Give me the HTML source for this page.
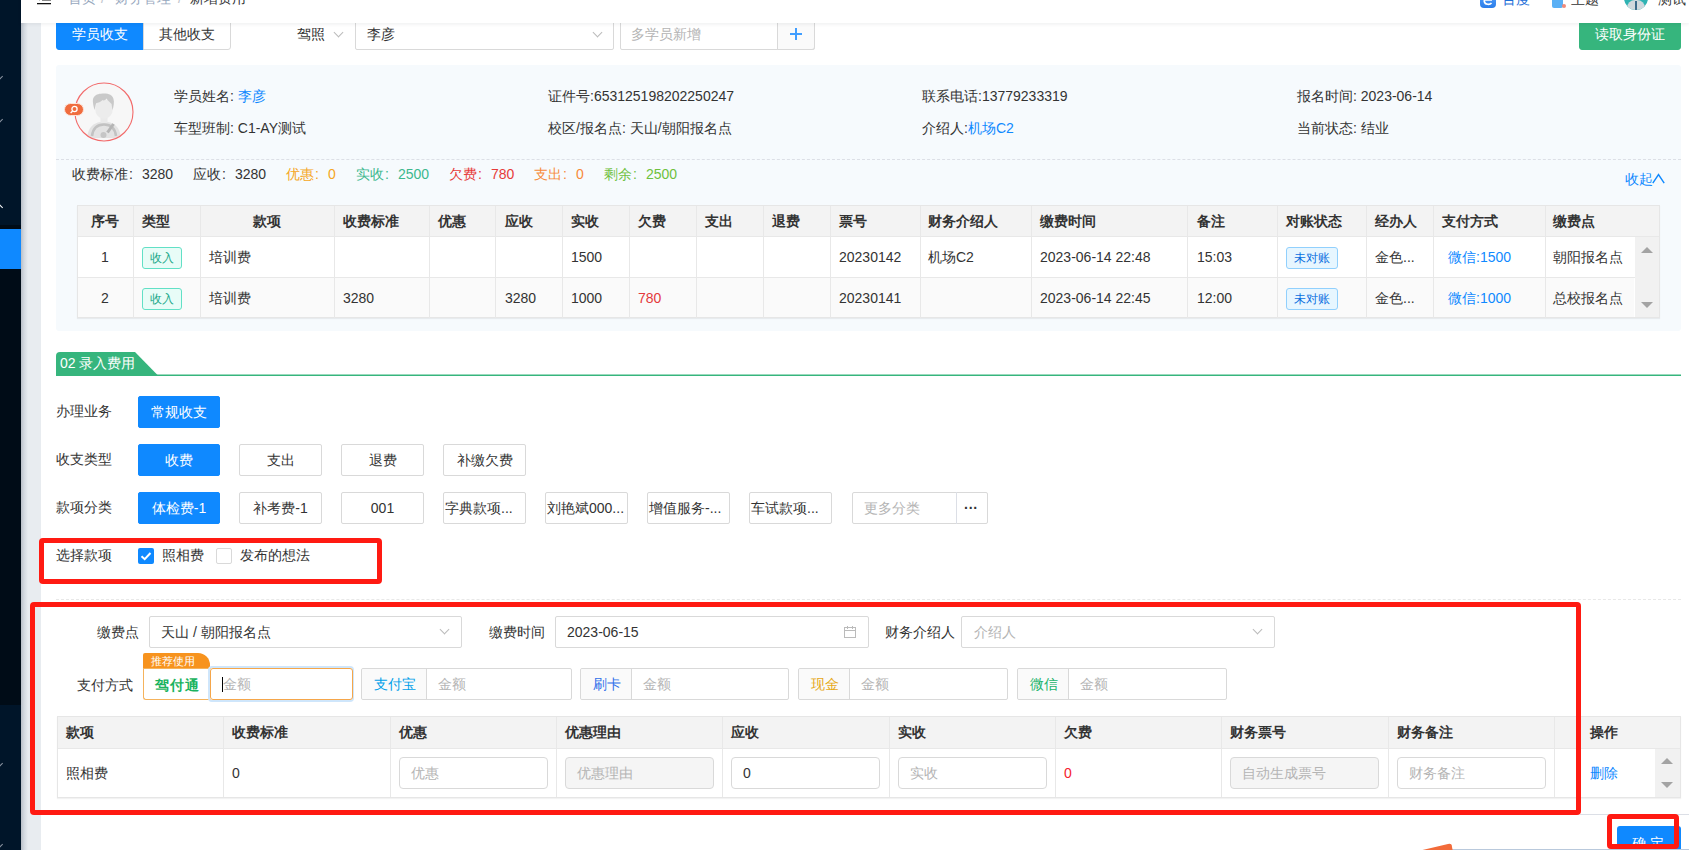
<!DOCTYPE html>
<html><head><meta charset="utf-8">
<style>
*{box-sizing:border-box;margin:0;padding:0}
html,body{width:1689px;height:850px;overflow:hidden;background:#fff;font-family:"Liberation Sans",sans-serif;font-size:14px;color:#333}
.a{position:absolute}
.t{position:absolute;white-space:nowrap;line-height:20px}
#sb{left:0;top:0;width:21px;height:850px;background:#001529}
#band{left:21px;top:0;width:20px;height:850px;background:#e8ecf0}
#band:before{content:"";position:absolute;left:0;top:0;width:7px;height:100%;background:linear-gradient(90deg,#b9bfc7,#d3d9e0 45%,#e8ecf0)}
#hdr{left:21px;top:0;width:1668px;height:23px;background:#fff;box-shadow:0 1px 4px rgba(0,21,41,.08);z-index:5;overflow:hidden}
.btn{position:absolute;height:32px;border:1px solid #d9d9d9;background:#fff;text-align:center;line-height:30px;white-space:nowrap;overflow:hidden;color:#333;border-radius:2px}
.btn.p{background:#0f89ff;border-color:#0f89ff;color:#fff}
.inp{position:absolute;border:1px solid #d9d9d9;background:#fff;border-radius:2px}
.chev{position:absolute;width:7px;height:7px;border-right:1px solid #bbb;border-bottom:1px solid #bbb;transform:rotate(45deg)}
</style></head><body>
<div id="sb" class="a"></div>
<div id="band" class="a"></div>

<div class="a" style="left:0;top:225px;width:21px;height:4px;background:#000c17"></div>
<div class="a" style="left:0;top:229px;width:21px;height:40px;background:#0f89ff"></div>
<div class="a" style="left:0;top:269px;width:21px;height:436px;background:#000c17"></div>
<div class="a" style="left:-3px;top:74px;width:5px;height:5px;border-right:1px solid #8d97a3;border-bottom:1px solid #8d97a3;transform:rotate(45deg)"></div>
<div class="a" style="left:-3px;top:117px;width:5px;height:5px;border-right:1px solid #8d97a3;border-bottom:1px solid #8d97a3;transform:rotate(45deg)"></div>
<div class="a" style="left:-3px;top:205px;width:5px;height:5px;border-left:1px solid #fff;border-top:1px solid #fff;transform:rotate(45deg)"></div>
<div class="a" style="left:-3px;top:761px;width:5px;height:5px;border-right:1px solid #8d97a3;border-bottom:1px solid #8d97a3;transform:rotate(45deg)"></div>
<div class="a" style="left:-3px;top:842px;width:5px;height:5px;border-right:1px solid #8d97a3;border-bottom:1px solid #8d97a3;transform:rotate(45deg)"></div>
<div id="hdr" class="a">
<div class="a" style="left:21px;top:-1px;width:9px;height:2px;background:#888"></div>
<div class="a" style="left:18px;top:-1px;width:1px;height:2px;background:#ccc"></div>
<div class="a" style="left:16px;top:3px;width:14px;height:1px;background:#111;box-shadow:0 0.5px 0.5px #777"></div>
<div class="t" style="left:47px;top:-12px;color:#97a8be">首页</div>
<div class="t" style="left:80px;top:-12px;color:#c0c4cc">/</div>
<div class="t" style="left:94px;top:-12px;color:#97a8be">财务管理</div>
<div class="t" style="left:157px;top:-12px;color:#c0c4cc">/</div>
<div class="t" style="left:169px;top:-12px;color:#303133">新增费用</div>
<div class="a" style="left:1459px;top:-8px;width:16px;height:16px;border-radius:4px;background:linear-gradient(#5aa6ff,#2b7de9)"></div><svg class="a" style="left:1459px;top:-8px" width="16" height="16" viewBox="0 0 16 16"><path d="M4 8 H12 M11.5 11 C10 13 5 13 4.3 9.5 C4 6 8 4.5 11 6.5" stroke="#fff" stroke-width="1.6" fill="none"/></svg>
<div class="t" style="left:1481px;top:-11px;color:#1f6fd8">百度</div>
<div class="a" style="left:1531px;top:-6px;width:11px;height:14px;border-radius:2px;background:#5ab0f5"></div><div class="a" style="left:1531px;top:-6px;width:5px;height:4px;background:#f0c070"></div>
<div class="a" style="left:1541px;top:4px;width:4px;height:4px;border-radius:2px;background:#f08a7a"></div>
<div class="t" style="left:1550px;top:-11px;color:#333">主题</div>
<div class="a" style="left:1603px;top:-14px;width:24px;height:24px;border-radius:12px;background:#2fb3b3;overflow:hidden"><div class="a" style="left:9px;top:0px;width:6px;height:12px;border-radius:3px;background:#f3d9c6"></div><div class="a" style="left:3px;top:14px;width:18px;height:14px;border-radius:8px 8px 0 0;background:#cfd8dd"></div><div class="a" style="left:11px;top:15px;width:2px;height:9px;background:#3a6a8a"></div></div>
<div class="t" style="left:1637px;top:-11px;color:#333">测试</div>
</div>

<!-- top row -->
<div class="btn p" style="left:56px;top:18px;width:88px;border-radius:0 0 0 3px">学员收支</div>
<div class="btn" style="left:143px;top:18px;width:88px;border-radius:0 0 3px 0">其他收支</div>
<div class="t" style="left:297px;top:24px">驾照</div>
<div class="chev" style="left:335px;top:29px"></div>
<div class="inp" style="left:355px;top:18px;width:259px;height:32px"></div>
<div class="t" style="left:367px;top:24px">李彦</div>
<div class="chev" style="left:594px;top:29px"></div>
<div class="inp" style="left:620px;top:18px;width:195px;height:32px"></div>
<div class="a" style="left:777px;top:18px;width:38px;height:32px;border:1px solid #d9d9d9;background:#fafafa;border-radius:0 3px 3px 0"></div>
<div class="t" style="left:631px;top:24px;color:#b4b4b4">多学员新增</div>
<div class="a" style="left:790px;top:33px;width:12px;height:2px;background:#409eff"></div>
<div class="a" style="left:795px;top:28px;width:2px;height:12px;background:#409eff"></div>
<div class="btn" style="left:1579px;top:18px;width:102px;background:#36b57d;border-color:#36b57d;color:#fff;border-radius:3px">读取身份证</div>

<!-- info card -->
<div class="a" style="left:56px;top:65px;width:1625px;height:266px;background:#f6fafd;border-radius:3px"></div>
<svg class="a" style="left:74px;top:82px" width="60" height="60" viewBox="0 0 60 60">
<defs><clipPath id="cc"><circle cx="30" cy="30" r="28.5"/></clipPath></defs>
<circle cx="30" cy="30" r="28.6" fill="#f7f7f7"/>
<g clip-path="url(#cc)">
<path d="M13 56 C14 45 20 41 26 40 L34 40 C40 41 46 45 47 56 Z" fill="#e3e3e3"/>
<rect x="26.5" y="33" width="7" height="8" fill="#eaeaea"/>
<ellipse cx="30" cy="27" rx="8.8" ry="10" fill="#ececec"/>
<path d="M20.5 28 C19 22 18 17 20 15 C22 12 26 11.5 30 11.5 C35 11.5 38.5 13 39.5 17 C40.5 20 39.5 25 38.5 28 L37.5 22 C36 20 34 19 32.5 16.5 C31.5 18.5 29 19 28.5 18 C27 20 24 20.5 22 21.5 Z" fill="#c9c9c9"/>
<path d="M18 54 C19 46 24 42.5 30 42.5 C36 42.5 41 46 42 54" stroke="#c2c2c2" stroke-width="2.6" fill="none"/>
<path d="M33.5 50.5 L39.5 42" stroke="#b5b5b5" stroke-width="3"/>
<circle cx="29.5" cy="53" r="3" fill="#c6c6c6"/>
</g>
<circle cx="30" cy="30" r="29" fill="none" stroke="#f26a6a" stroke-width="1.1"/>
</svg>
<div class="a" style="left:64px;top:103px;width:20px;height:13px;border-radius:7px;background:#f06c3e;border:1px solid #fde3d8"></div>
<svg class="a" style="left:68px;top:105px" width="12" height="9" viewBox="0 0 12 9"><circle cx="6.5" cy="4" r="2.6" stroke="#fff" stroke-width="1.3" fill="none"/><path d="M4.6 6 L2.6 8" stroke="#fff" stroke-width="1.4"/></svg>

<div class="t" style="left:174px;top:86px">学员姓名: <span style="color:#0f89ff">李彦</span></div>
<div class="t" style="left:174px;top:118px">车型班制: C1-AY测试</div>
<div class="t" style="left:548px;top:86px">证件号:653125198202250247</div>
<div class="t" style="left:548px;top:118px">校区/报名点: 天山/朝阳报名点</div>
<div class="t" style="left:922px;top:86px">联系电话:13779233319</div>
<div class="t" style="left:922px;top:118px">介绍人:<span style="color:#0f89ff">机场C2</span></div>
<div class="t" style="left:1297px;top:86px">报名时间: 2023-06-14</div>
<div class="t" style="left:1297px;top:118px">当前状态: 结业</div>
<div class="a" style="left:56px;top:159px;width:1625px;height:0;border-top:1px dashed #dcdfe6"></div>

<div class="t" style="left:72px;top:164px">收费标准<span style="display:inline-block;width:14px;padding-left:1px">:</span>3280</div>
<div class="t" style="left:193px;top:164px">应收<span style="display:inline-block;width:14px;padding-left:1px">:</span>3280</div>
<div class="t" style="left:286px;top:164px;color:#f5a623">优惠<span style="display:inline-block;width:14px;padding-left:1px">:</span>0</div>
<div class="t" style="left:356px;top:164px;color:#3cb88e">实收<span style="display:inline-block;width:14px;padding-left:1px">:</span>2500</div>
<div class="t" style="left:449px;top:164px;color:#e63a3a">欠费<span style="display:inline-block;width:14px;padding-left:1px">:</span>780</div>
<div class="t" style="left:534px;top:164px;color:#f78a3a">支出<span style="display:inline-block;width:14px;padding-left:1px">:</span>0</div>
<div class="t" style="left:604px;top:164px;color:#6ec13e">剩余<span style="display:inline-block;width:14px;padding-left:1px">:</span>2500</div>
<div class="t" style="left:1625px;top:169px;color:#0f89ff">收起</div>
<svg class="a" style="left:1652px;top:173px" width="13" height="11" viewBox="0 0 13 11"><path d="M0.8 10.2 L6.5 1.5 L12.2 10.2" stroke="#0f89ff" stroke-width="1.4" fill="none"/></svg>

<!-- table1 -->
<div class="a" style="left:77px;top:205px;width:1583px;height:113px;background:#fff;border:1px solid #e6e6e6;box-shadow:0 1px 1px rgba(0,0,0,.06)"></div>
<div class="a" style="left:78px;top:206px;width:1581px;height:30px;background:#f3f3f3"></div>
<div class="a" style="left:78px;top:277px;width:1556px;height:40px;background:#fafafa"></div>
<div class="a" style="left:78px;top:236px;width:1581px;height:1px;background:#e8e8e8"></div>
<div class="a" style="left:78px;top:277px;width:1581px;height:1px;background:#e8e8e8"></div>
<div class="a" style="left:133px;top:206px;width:1px;height:112px;background:#e8e8e8"></div>
<div class="a" style="left:200px;top:206px;width:1px;height:112px;background:#e8e8e8"></div>
<div class="a" style="left:334px;top:206px;width:1px;height:112px;background:#e8e8e8"></div>
<div class="a" style="left:429px;top:206px;width:1px;height:112px;background:#e8e8e8"></div>
<div class="a" style="left:495px;top:206px;width:1px;height:112px;background:#e8e8e8"></div>
<div class="a" style="left:562px;top:206px;width:1px;height:112px;background:#e8e8e8"></div>
<div class="a" style="left:629px;top:206px;width:1px;height:112px;background:#e8e8e8"></div>
<div class="a" style="left:696px;top:206px;width:1px;height:112px;background:#e8e8e8"></div>
<div class="a" style="left:763px;top:206px;width:1px;height:112px;background:#e8e8e8"></div>
<div class="a" style="left:830px;top:206px;width:1px;height:112px;background:#e8e8e8"></div>
<div class="a" style="left:920px;top:206px;width:1px;height:112px;background:#e8e8e8"></div>
<div class="a" style="left:1031px;top:206px;width:1px;height:112px;background:#e8e8e8"></div>
<div class="a" style="left:1187px;top:206px;width:1px;height:112px;background:#e8e8e8"></div>
<div class="a" style="left:1277px;top:206px;width:1px;height:112px;background:#e8e8e8"></div>
<div class="a" style="left:1366px;top:206px;width:1px;height:112px;background:#e8e8e8"></div>
<div class="a" style="left:1433px;top:206px;width:1px;height:112px;background:#e8e8e8"></div>
<div class="a" style="left:1545px;top:206px;width:1px;height:112px;background:#e8e8e8"></div>

<div class="a" style="left:1635px;top:237px;width:24px;height:80px;background:#f1f1f1"></div>
<div class="a" style="left:1641px;top:247px;width:0;height:0;border-left:6px solid transparent;border-right:6px solid transparent;border-bottom:6px solid #a3a3a3"></div>
<div class="a" style="left:1641px;top:302px;width:0;height:0;border-left:6px solid transparent;border-right:6px solid transparent;border-top:6px solid #a3a3a3"></div>
<div class="t" style="left:77px;width:56px;text-align:center;top:211px;font-weight:bold">序号</div>
<div class="t" style="left:142px;top:211px;font-weight:bold">类型</div>
<div class="t" style="left:200px;width:134px;text-align:center;top:211px;font-weight:bold">款项</div>
<div class="t" style="left:343px;top:211px;font-weight:bold">收费标准</div>
<div class="t" style="left:438px;top:211px;font-weight:bold">优惠</div>
<div class="t" style="left:505px;top:211px;font-weight:bold">应收</div>
<div class="t" style="left:571px;top:211px;font-weight:bold">实收</div>
<div class="t" style="left:638px;top:211px;font-weight:bold">欠费</div>
<div class="t" style="left:705px;top:211px;font-weight:bold">支出</div>
<div class="t" style="left:772px;top:211px;font-weight:bold">退费</div>
<div class="t" style="left:839px;top:211px;font-weight:bold">票号</div>
<div class="t" style="left:928px;top:211px;font-weight:bold">财务介绍人</div>
<div class="t" style="left:1040px;top:211px;font-weight:bold">缴费时间</div>
<div class="t" style="left:1197px;top:211px;font-weight:bold">备注</div>
<div class="t" style="left:1286px;top:211px;font-weight:bold">对账状态</div>
<div class="t" style="left:1375px;top:211px;font-weight:bold">经办人</div>
<div class="t" style="left:1442px;top:211px;font-weight:bold">支付方式</div>
<div class="t" style="left:1553px;top:211px;font-weight:bold">缴费点</div>
<div class="t" style="left:77px;width:56px;text-align:center;top:247px">1</div>
<div class="a" style="left:142px;top:247px;width:40px;height:22px;border:1px solid #62e0c6;background:#e8fcf7;border-radius:3px;color:#20a889;font-size:12px;line-height:20px;text-align:center">收入</div>
<div class="t" style="left:209px;top:247px">培训费</div>
<div class="t" style="left:571px;top:247px">1500</div>
<div class="t" style="left:839px;top:247px">20230142</div>
<div class="t" style="left:928px;top:247px">机场C2</div>
<div class="t" style="left:1040px;top:247px">2023-06-14 22:48</div>
<div class="t" style="left:1197px;top:247px">15:03</div>
<div class="t" style="left:1375px;top:247px">金色...</div>
<div class="t" style="left:1448px;top:247px;color:#0f89ff">微信:1500</div>
<div class="t" style="left:1553px;top:247px">朝阳报名点</div>
<div class="a" style="left:1286px;top:247px;width:52px;height:22px;border:1px solid #91d0fd;background:#e7f6ff;border-radius:3px;color:#0b6fe0;font-size:12px;line-height:20px;text-align:center">未对账</div>
<div class="t" style="left:77px;width:56px;text-align:center;top:288px">2</div>
<div class="a" style="left:142px;top:288px;width:40px;height:22px;border:1px solid #62e0c6;background:#e8fcf7;border-radius:3px;color:#20a889;font-size:12px;line-height:20px;text-align:center">收入</div>
<div class="t" style="left:209px;top:288px">培训费</div>
<div class="t" style="left:343px;top:288px">3280</div>
<div class="t" style="left:505px;top:288px">3280</div>
<div class="t" style="left:571px;top:288px">1000</div>
<div class="t" style="left:638px;top:288px;color:#e4393c">780</div>
<div class="t" style="left:839px;top:288px">20230141</div>
<div class="t" style="left:1040px;top:288px">2023-06-14 22:45</div>
<div class="t" style="left:1197px;top:288px">12:00</div>
<div class="t" style="left:1375px;top:288px">金色...</div>
<div class="t" style="left:1448px;top:288px;color:#0f89ff">微信:1000</div>
<div class="t" style="left:1553px;top:288px">总校报名点</div>
<div class="a" style="left:1286px;top:288px;width:52px;height:22px;border:1px solid #91d0fd;background:#e7f6ff;border-radius:3px;color:#0b6fe0;font-size:12px;line-height:20px;text-align:center">未对账</div>

<!-- form -->
<svg class="a" style="left:56px;top:352px" width="1625" height="25" viewBox="0 0 1625 25">
<path d="M0 23.5 V4 Q0 0 4 0 H79 L102 23.5 Z" fill="#36b57d"/>
<rect x="0" y="22.5" width="1625" height="1.5" fill="#36b57d"/></svg>
<div class="t" style="left:60px;top:353px;color:#fff">02 录入费用</div>
<div class="t" style="left:56px;top:401px;color:#333">办理业务</div>
<div class="t" style="left:56px;top:449px;color:#333">收支类型</div>
<div class="t" style="left:56px;top:497px;color:#333">款项分类</div>
<div class="t" style="left:56px;top:545px;color:#333">选择款项</div>
<div class="btn p" style="left:138px;top:396px;width:82px;">常规收支</div>
<div class="btn p" style="left:138px;top:444px;width:82px;">收费</div>
<div class="btn" style="left:239px;top:444px;width:83px;">支出</div>
<div class="btn" style="left:341px;top:444px;width:83px;">退费</div>
<div class="btn" style="left:443px;top:444px;width:83px;">补缴欠费</div>
<div class="btn p" style="left:138px;top:492px;width:82px;padding:0 2px;text-overflow:clip">体检费-1</div>
<div class="btn" style="left:239px;top:492px;width:83px;padding:0 2px;text-overflow:clip">补考费-1</div>
<div class="btn" style="left:341px;top:492px;width:83px;padding:0 2px;text-overflow:clip">001</div>
<div class="btn" style="left:443px;top:492px;width:83px;padding:0 0 0 1px;text-align:left">字典款项...</div>
<div class="btn" style="left:545px;top:492px;width:83px;padding:0 0 0 1px;text-align:left">刘艳斌000...</div>
<div class="btn" style="left:647px;top:492px;width:83px;padding:0 0 0 1px;text-align:left">增值服务-...</div>
<div class="btn" style="left:749px;top:492px;width:83px;padding:0 0 0 1px;text-align:left">车试款项...</div>
<div class="inp" style="left:852px;top:492px;width:136px;height:32px;border-radius:2px"></div>
<div class="a" style="left:956px;top:492px;width:1px;height:32px;background:#dcdfe6"></div>
<div class="t" style="left:864px;top:498px;color:#b4b4b4">更多分类</div>
<div class="t" style="left:964px;top:498px;color:#333;font-weight:bold;letter-spacing:0px">···</div>
<div class="a" style="left:138px;top:548px;width:16px;height:16px;background:#0f89ff;border-radius:2px"></div>
<svg class="a" style="left:138px;top:548px" width="16" height="16" viewBox="0 0 16 16"><path d="M3.5 8.2 L6.7 11.2 L12.5 5" stroke="#fff" stroke-width="2" fill="none"/></svg>
<div class="t" style="left:162px;top:545px">照相费</div>
<div class="a" style="left:216px;top:548px;width:16px;height:16px;border:1px solid #d9d9d9;background:#fff;border-radius:2px"></div>
<div class="t" style="left:240px;top:545px">发布的想法</div>
<div class="a" style="left:56px;top:599px;width:1625px;height:0;border-top:1px dashed #e8e8e8"></div>
<div class="t" style="left:56px;width:83px;text-align:right;top:622px">缴费点</div>
<div class="inp" style="left:149px;top:616px;width:313px;height:32px"></div>
<div class="t" style="left:161px;top:622px">天山 / 朝阳报名点</div>
<div class="chev" style="left:441px;top:626px"></div>
<div class="t" style="left:489px;top:622px">缴费时间</div>
<div class="inp" style="left:555px;top:616px;width:314px;height:32px"></div>
<div class="t" style="left:567px;top:622px">2023-06-15</div>
<svg class="a" style="left:843px;top:625px" width="14" height="14" viewBox="0 0 14 14"><rect x="1.5" y="2.5" width="11" height="10" fill="none" stroke="#bbb" stroke-width="1"/><path d="M1.5 5.5 H12.5 M4.5 1 V4 M9.5 1 V4" stroke="#bbb" stroke-width="1"/></svg>
<div class="t" style="left:885px;top:622px">财务介绍人</div>
<div class="inp" style="left:961px;top:616px;width:314px;height:32px"></div>
<div class="t" style="left:974px;top:622px;color:#b4b4b4">介绍人</div>
<div class="chev" style="left:1254px;top:626px"></div>
<div class="t" style="left:56px;width:77px;text-align:right;top:675px">支付方式</div>
<div class="a" style="left:143px;top:653px;width:67px;height:17px;background:#f7931e;border-radius:2px 12px 0 0"></div>
<div class="t" style="left:151px;top:651px;color:#fff;font-size:11px">推荐使用</div>
<div class="a" style="left:143px;top:668px;width:68px;height:32px;border:1px solid #f5b35c;border-right:none;background:#fff;border-radius:0 0 0 3px"></div>
<div class="t" style="left:155px;top:675px;color:#1ab35e;font-weight:bold;letter-spacing:1px">驾付通</div>
<div class="a" style="left:208px;top:666px;width:146px;height:36px;border:2px solid #cfe6fb;border-radius:4px"></div>
<div class="a" style="left:210px;top:668px;width:143px;height:32px;border:1px solid #f5a64a;background:#fff;border-radius:3px"></div>
<div class="a" style="left:222px;top:677px;width:1px;height:15px;background:#000"></div>
<div class="t" style="left:223px;top:674px;color:#b4b4b4">金额</div>
<div class="inp" style="left:361px;top:668px;width:211px;height:32px"></div>
<div class="a" style="left:362px;top:669px;width:65px;height:30px;background:#fafafa;border-right:1px solid #d9d9d9;border-radius:2px 0 0 2px"></div>
<div class="t" style="left:362px;width:65px;text-align:center;top:674px;color:#00a0e9">支付宝</div>
<div class="t" style="left:438px;top:674px;color:#b4b4b4">金额</div>
<div class="inp" style="left:580px;top:668px;width:209px;height:32px"></div>
<div class="a" style="left:581px;top:669px;width:51px;height:30px;background:#fafafa;border-right:1px solid #d9d9d9;border-radius:2px 0 0 2px"></div>
<div class="t" style="left:581px;width:51px;text-align:center;top:674px;color:#2f6fea">刷卡</div>
<div class="t" style="left:643px;top:674px;color:#b4b4b4">金额</div>
<div class="inp" style="left:798px;top:668px;width:210px;height:32px"></div>
<div class="a" style="left:799px;top:669px;width:51px;height:30px;background:#fafafa;border-right:1px solid #d9d9d9;border-radius:2px 0 0 2px"></div>
<div class="t" style="left:799px;width:51px;text-align:center;top:674px;color:#e6a817">现金</div>
<div class="t" style="left:861px;top:674px;color:#b4b4b4">金额</div>
<div class="inp" style="left:1017px;top:668px;width:210px;height:32px"></div>
<div class="a" style="left:1018px;top:669px;width:51px;height:30px;background:#fafafa;border-right:1px solid #d9d9d9;border-radius:2px 0 0 2px"></div>
<div class="t" style="left:1018px;width:51px;text-align:center;top:674px;color:#20b36b">微信</div>
<div class="t" style="left:1080px;top:674px;color:#b4b4b4">金额</div>

<!-- table2/footer -->
<div class="a" style="left:57px;top:716px;width:1624px;height:82px;background:#fff;border:1px solid #e6e6e6;box-shadow:0 1px 1px rgba(0,0,0,.05)"></div>
<div class="a" style="left:58px;top:717px;width:1622px;height:31px;background:#f3f3f3"></div>
<div class="a" style="left:58px;top:748px;width:1622px;height:1px;background:#e8e8e8"></div>
<div class="a" style="left:223px;top:717px;width:1px;height:80px;background:#e8e8e8"></div>
<div class="a" style="left:390px;top:717px;width:1px;height:80px;background:#e8e8e8"></div>
<div class="a" style="left:556px;top:717px;width:1px;height:80px;background:#e8e8e8"></div>
<div class="a" style="left:722px;top:717px;width:1px;height:80px;background:#e8e8e8"></div>
<div class="a" style="left:889px;top:717px;width:1px;height:80px;background:#e8e8e8"></div>
<div class="a" style="left:1055px;top:717px;width:1px;height:80px;background:#e8e8e8"></div>
<div class="a" style="left:1221px;top:717px;width:1px;height:80px;background:#e8e8e8"></div>
<div class="a" style="left:1388px;top:717px;width:1px;height:80px;background:#e8e8e8"></div>
<div class="a" style="left:1554px;top:717px;width:1px;height:80px;background:#e8e8e8"></div>
<div class="a" style="left:1655px;top:749px;width:25px;height:48px;background:#f1f1f1"></div>
<div class="a" style="left:1661px;top:758px;width:0;height:0;border-left:6px solid transparent;border-right:6px solid transparent;border-bottom:6px solid #a3a3a3"></div>
<div class="a" style="left:1661px;top:782px;width:0;height:0;border-left:6px solid transparent;border-right:6px solid transparent;border-top:6px solid #a3a3a3"></div>
<div class="t" style="left:66px;top:722px;font-weight:bold">款项</div>
<div class="t" style="left:232px;top:722px;font-weight:bold">收费标准</div>
<div class="t" style="left:399px;top:722px;font-weight:bold">优惠</div>
<div class="t" style="left:565px;top:722px;font-weight:bold">优惠理由</div>
<div class="t" style="left:731px;top:722px;font-weight:bold">应收</div>
<div class="t" style="left:898px;top:722px;font-weight:bold">实收</div>
<div class="t" style="left:1064px;top:722px;font-weight:bold">欠费</div>
<div class="t" style="left:1230px;top:722px;font-weight:bold">财务票号</div>
<div class="t" style="left:1397px;top:722px;font-weight:bold">财务备注</div>
<div class="t" style="left:1590px;top:722px;font-weight:bold">操作</div>
<div class="t" style="left:66px;top:763px">照相费</div>
<div class="t" style="left:232px;top:763px">0</div>
<div class="t" style="left:1064px;top:763px;color:#f5222d">0</div>
<div class="t" style="left:1590px;top:763px;color:#0f89ff">删除</div>
<div class="inp" style="left:399px;top:757px;width:149px;height:32px;background:#fff;border-color:#d9d9d9;border-radius:4px"></div>
<div class="t" style="left:411px;top:763px;color:#b4b4b4">优惠</div>
<div class="inp" style="left:565px;top:757px;width:149px;height:32px;background:#f5f5f5;border-color:#d9d9d9;border-radius:4px"></div>
<div class="t" style="left:577px;top:763px;color:#b4b4b4">优惠理由</div>
<div class="inp" style="left:731px;top:757px;width:149px;height:32px;background:#fff;border-color:#d9d9d9;border-radius:4px"></div>
<div class="t" style="left:743px;top:763px">0</div>
<div class="inp" style="left:898px;top:757px;width:149px;height:32px;background:#fff;border-color:#d9d9d9;border-radius:4px"></div>
<div class="t" style="left:910px;top:763px;color:#b4b4b4">实收</div>
<div class="inp" style="left:1230px;top:757px;width:149px;height:32px;background:#f5f5f5;border-color:#d9d9d9;border-radius:4px"></div>
<div class="t" style="left:1242px;top:763px;color:#b4b4b4">自动生成票号</div>
<div class="inp" style="left:1397px;top:757px;width:149px;height:32px;background:#fff;border-color:#d9d9d9;border-radius:4px"></div>
<div class="t" style="left:1409px;top:763px;color:#b4b4b4">财务备注</div>
<div class="a" style="left:1580px;top:814px;width:109px;height:1px;background:#dcdfe6"></div>
<div class="a" style="left:1617px;top:826px;width:64px;height:40px;background:#0f89ff;border-radius:3px"></div>
<div class="t" style="left:1632px;top:833px;color:#fff">确 定</div>
<div class="a" style="left:1450px;top:849px;width:239px;height:1px;background:#b9c9dc"></div>
<svg class="a" style="left:1410px;top:838px" width="50" height="14" viewBox="0 0 50 14"><path d="M4 14 L38 6 Q42 5 42 9 L43 14 Z" fill="#f26b3a"/></svg>
<div class="a" style="left:39px;top:538px;width:343px;height:46px;border:5px solid #ff1a12;border-radius:4px"></div>
<div class="a" style="left:30px;top:602px;width:1551px;height:213px;border:5px solid #ff1a12;border-radius:4px"></div>
<div class="a" style="left:1607px;top:814px;width:72px;height:35px;border:5px solid #ff1a12;border-radius:4px"></div>
</body></html>
